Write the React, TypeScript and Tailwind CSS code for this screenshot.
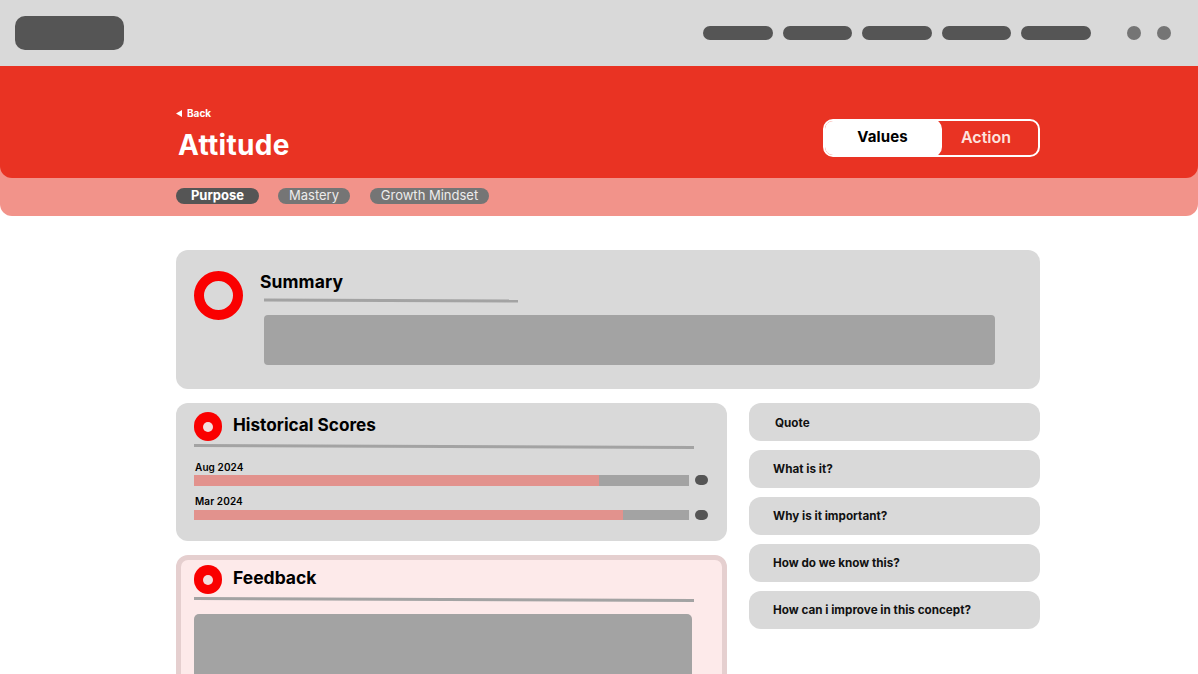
const font = "font-['Inter','Liberation_Sans',sans-serif]";

function Ring() {
  return (
    <div className="flex h-[29px] w-[28px] shrink-0 items-center justify-center rounded-full bg-[#fa0000]">
      <div className="h-[10px] w-[10px] rounded-full bg-[#f3dede]" />
    </div>
  );
}

function Divider({ width, className = '' }: { width: string; className?: string }) {
  return <div className={`h-[3px] rotate-[0.25deg] bg-[#a3a3a3] ${width} ${className}`} />;
}

function ScoreRow({ label, fill, className, barGap }: { label: string; fill: string; className: string; barGap: string }) {
  return (
    <div className={className}>
      <div className="ml-px h-[12px] text-[10px] leading-[12px] font-semibold tracking-[0.1px] text-black">{label}</div>
      <div className={`flex items-center ${barGap}`}>
        <div className="h-[10.5px] w-[494.5px] bg-[#a3a3a3]">
          <div className={`h-full bg-[#e2928d] ${fill}`} />
        </div>
        <div className="ml-[6.5px] h-[10px] w-[13px] rounded-[5px] bg-[#555555]" />
      </div>
    </div>
  );
}

const questions = ['What is it?', 'Why is it important?', 'How do we know this?', 'How can i improve in this concept?'];

export default function App() {
  return (
    <div className={`h-[674px] w-[1198px] overflow-hidden bg-white ${font}`}>
      {/* Top nav */}
      <div className="flex h-[66px] items-center bg-[#d9d9d9] pr-[27px] pl-[15px]">
        <div className="h-[34px] w-[109px] rounded-[10px] bg-[#555555]" />
        <div className="ml-auto flex gap-[10px]">
          {[0, 1, 2, 3, 4].map((i) => (
            <div key={i} className="h-[14px] w-[69.6px] rounded-[7px] bg-[#555555]" />
          ))}
        </div>
        <div className="ml-[36px] flex gap-[16px]">
          <div className="h-[14px] w-[14px] rounded-full bg-[#757575]" />
          <div className="h-[14px] w-[14px] rounded-full bg-[#757575]" />
        </div>
      </div>

      {/* Hero */}
      <div className="rounded-b-[12px] bg-[#f2938a]">
        <div className="flex h-[112px] items-start justify-between rounded-b-[12px] bg-[#e93323] pr-[158px] pl-[176px]">
          <div className="pt-[40px]">
            <div className="flex h-[14px] items-center text-[10px] font-bold text-white">
              <svg width="6" height="7" viewBox="0 0 6 7" className="mr-[5px]">
                <path d="M6 0V7L0 3.5z" fill="#fff" />
              </svg>
              Back
            </div>
            <h1 className="mt-[7px] ml-[2px] text-[28px] leading-[36px] font-bold tracking-[0.3px] text-white">Attitude</h1>
          </div>
          <div className="mt-[53px] flex h-[38px] w-[217px] overflow-hidden rounded-[10px] border-2 border-white">
            <div className="-m-[2px] flex w-[119px] items-center justify-center rounded-[10px] bg-white pb-[1px] text-[15px] font-bold tracking-[0.1px] text-black">
              Values
            </div>
            <div className="flex flex-1 items-center justify-center pr-[6px] pb-[3px] text-[16px] font-semibold text-[#fde3df]">
              Action
            </div>
          </div>
        </div>
        <div className="flex h-[38px] items-start pt-[10px] pl-[176px] text-[13px]">
          <div className="flex h-[16px] w-[83px] items-center justify-center rounded-[8px] bg-[#555555] font-bold text-white">Purpose</div>
          <div className="ml-[19px] flex h-[16px] w-[72px] items-center justify-center rounded-[8px] bg-[#757575] text-[#ececec]">Mastery</div>
          <div className="ml-[20px] flex h-[16px] w-[119px] items-center justify-center rounded-[8px] bg-[#757575] text-[#ececec]">Growth Mindset</div>
        </div>
      </div>

      {/* Content */}
      <div className="mt-[34px] mr-[158px] ml-[176px]">
        <section className="flex h-[139px] rounded-[12px] bg-[#d9d9d9] pt-[21px] pl-[18px]">
          <div className="h-[49px] w-[49px] shrink-0 rounded-full border-[10px] border-[#fa0000]" />
          <div className="ml-[17px]">
            <h2 className="text-[17.5px] leading-[22px] font-bold tracking-[0.1px] text-black">Summary</h2>
            <Divider width="w-[254px]" className="mt-[6px] ml-[4px]" />
            <div className="mt-[13px] ml-[4px] h-[50px] w-[731px] rounded-[4px] bg-[#a3a3a3]" />
          </div>
        </section>

        <div className="mt-[14px] flex items-start">
          <div className="w-[551px]">
            <section className="h-[138px] rounded-[12px] bg-[#d9d9d9] pt-[9px] pl-[18px]">
              <div className="flex h-[29px] items-center">
                <Ring />
                <h2 className="mb-[3px] ml-[11px] text-[17.2px] font-bold text-black">Historical Scores</h2>
              </div>
              <Divider width="w-[500px]" className="mt-[4px]" />
              <ScoreRow label="Aug 2024" fill="w-[82%]" className="mt-[13px]" barGap="mt-[2px]" />
              <ScoreRow label="Mar 2024" fill="w-[86.7%]" className="mt-[9px]" barGap="mt-[3px]" />
            </section>

            <section className="mt-[14px] h-[160px] rounded-[12px] border-[5px] border-[#e5cfcf] bg-[#fdeaea] pt-[5px] pl-[13px]">
              <div className="flex h-[29px] items-center">
                <Ring />
                <h2 className="mb-[2px] ml-[11px] text-[17.5px] font-bold text-black">Feedback</h2>
              </div>
              <Divider width="w-[500px]" className="mt-[4px]" />
              <div className="mt-[13px] h-[100px] w-[498px] rounded-[5px] bg-[#a3a3a3]" />
            </section>
          </div>

          <div className="ml-[22px] flex w-[291px] flex-col gap-[9.5px] text-[11.7px] font-bold text-[#111111]">
            <div className="flex h-[37.5px] items-center rounded-[12px] bg-[#d9d9d9] pt-[4px] pl-[26px]">Quote</div>
            {questions.map((q) => (
              <div key={q} className="flex h-[37.5px] items-center rounded-[12px] bg-[#d9d9d9] pt-[2px] pl-[24px]">
                {q}
              </div>
            ))}
          </div>
        </div>
      </div>
    </div>
  );
}
